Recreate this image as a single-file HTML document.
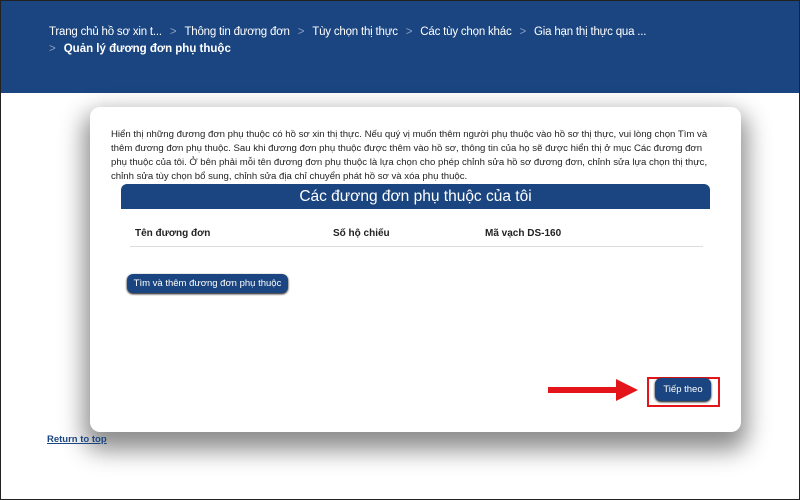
<!DOCTYPE html>
<html><head><meta charset="utf-8"><style>
*{margin:0;padding:0;box-sizing:border-box}
body{width:800px;height:500px;overflow:hidden;background:#fff;font-family:"Liberation Sans",sans-serif;position:relative;}
.frame{position:absolute;inset:0;border:1px solid #222;pointer-events:none;z-index:10}
.hdr{position:absolute;left:0;top:0;width:800px;height:93px;background:#1b4580;color:#fff;font-size:11.5px}
.hdr .l1{position:absolute;left:49px;top:26px;letter-spacing:-0.2px}
.hdr .l2{position:absolute;left:49px;top:43px;font-weight:bold}
.sep{color:#8aa0c4;margin:0 8px}
.card{position:absolute;left:90px;top:107px;width:651px;height:325px;background:#fff;border-radius:10px;box-shadow:0 12px 24px 6px rgba(0,0,0,0.45)}
.p{position:absolute;left:111px;top:128px;font-size:9.6px;line-height:14px;color:#222;letter-spacing:0;white-space:nowrap}
.bar{position:absolute;left:121px;top:184px;width:589px;height:25px;background:#1b4580;border-radius:6px 6px 0 0;color:#fff;font-size:15.5px;text-align:center;line-height:25px}
.th{position:absolute;top:228px;font-size:10px;font-weight:bold;color:#222}
.line{position:absolute;left:130px;top:246px;width:573px;height:1px;background:#ddd}
.btn{position:absolute;background:#1b4580;color:#fff;font-size:9.5px;border-radius:6px;text-align:center;box-shadow:0 1px 2px #000}
.arrow{position:absolute;left:548px;top:379px}
.red{position:absolute;left:647px;top:377px;width:73px;height:30px;border:2px solid #e3151a}
.rt{position:absolute;left:47px;top:434px;font-size:9.5px;font-weight:bold;color:#1b4580;text-decoration:underline}
</style></head><body>
<div class="hdr">
<div class="l1">Trang chủ hồ sơ xin t...<span class="sep">&gt;</span>Thông tin đương đơn<span class="sep">&gt;</span>Tùy chọn thị thực<span class="sep">&gt;</span>Các tùy chọn khác<span class="sep">&gt;</span>Gia hạn thị thực qua ...</div>
<div class="l2"><span class="sep" style="margin-left:0;font-weight:normal">&gt;</span>Quản lý đương đơn phụ thuộc</div>
</div>
<div class="card"></div>
<div class="p">Hiển thị những đương đơn phụ thuộc có hồ sơ xin thị thực. Nếu quý vị muốn thêm người phụ thuộc vào hồ sơ thị thực, vui lòng chọn Tìm và<br>thêm đương đơn phụ thuộc. Sau khi đương đơn phụ thuộc được thêm vào hồ sơ, thông tin của họ sẽ được hiển thị ở mục Các đương đơn<br>phụ thuộc của tôi. Ở bên phải mỗi tên đương đơn phụ thuộc là lựa chọn cho phép chỉnh sửa hồ sơ đương đơn, chỉnh sửa lựa chọn thị thực,<br>chỉnh sửa tùy chọn bổ sung, chỉnh sửa địa chỉ chuyển phát hồ sơ và xóa phụ thuộc.</div>
<div class="bar">Các đương đơn phụ thuộc của tôi</div>
<div class="th" style="left:135px">Tên đương đơn</div>
<div class="th" style="left:333px">Số hộ chiếu</div>
<div class="th" style="left:485px">Mã vạch DS-160</div>
<div class="line"></div>
<div class="btn" style="left:127px;top:274px;width:161px;height:19px;line-height:19px">Tìm và thêm đương đơn phụ thuộc</div>
<svg class="arrow" width="92" height="22"><rect x="0" y="8" width="70" height="6" fill="#e3151a"/><path d="M68 0 L90 11 L68 22 Z" fill="#e3151a"/></svg>
<div class="red"></div>
<div class="btn" style="left:655px;top:378px;width:56px;height:23px;line-height:23px">Tiếp theo</div>
<div class="rt">Return to top</div>
<div class="frame"></div>
</body></html>
